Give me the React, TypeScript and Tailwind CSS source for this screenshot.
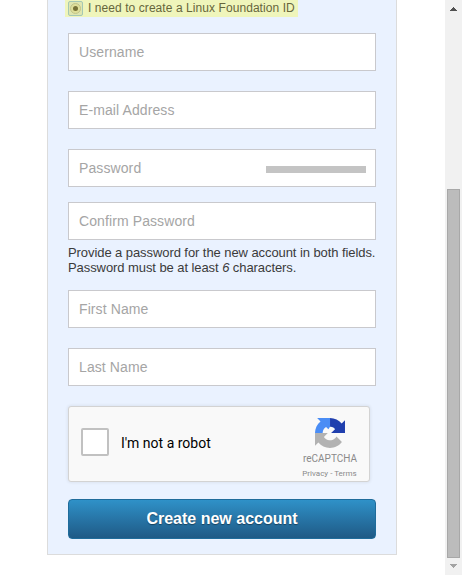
type FieldProps = { label: string; className?: string; strength?: boolean };

function Field({ label, className = "", strength = false }: FieldProps) {
  return (
    <div className={`flex h-[38px] shrink-0 items-center justify-between border border-[#c9c9cd] bg-white px-2.5 pr-[9px] text-[14px] tracking-[0.1px] text-[#a5a5a5] ${className}`}>
      <span>{label}</span>
      {strength && <span className="mt-[3px] h-[7px] w-[100px] bg-[#c4c4c4]" />}
    </div>
  );
}

function RecaptchaLogo() {
  return (
    <svg width="30" height="30" viewBox="0 0 64 64" className="block">
      <path fill="#203fae" d="M64 31.955l-.033-1.37V4.687l-7.16 7.16C50.948 4.674 42.033.093 32.05.093v18.6c.485 0 .86.057 1.135.163 4.976.393 7 1.5 9.5 5l-8.307 8.1L64 31.953" />
      <path fill="#4a8df5" d="M32.05.094H4.594l7.16 7.16C4.58 13.147 0 22.06 0 32.046h16.26c0-.485.057-.86.163-1.135.393-4.976 3.14-9.288 7.124-11.828l5 5 3.5-5.4V.095" />
      <path fill="#b2b2b2" d="M.001 32.045l.033 1.37v25.898l7.16-7.16c5.86 7.173 14.774 11.754 24.76 11.754 10.4 0 19.622-4.96 25.458-12.64l-11.736-11.86a15.55 15.55 0 0 1-4.754 5.334c-2.05 1.6-4.952 2.906-8.968 2.906-.485 0-.86-.057-1.135-.163-4.976-.393-9.288-3.14-11.828-7.124l8.307-8.307c-10.522.04-22.4.066-27.295-.005" />
    </svg>
  );
}

function Recaptcha() {
  return (
    <div className="mt-5 flex h-[76px] w-[302px] shrink-0 rounded-[3px] border border-[#d3d3d3] bg-[#f9f9f9] font-[Roboto,sans-serif] shadow-[0_0_3px_1px_rgba(0,0,0,0.06)]">
      <div className="flex flex-1 items-center pb-1 pl-3">
        <span className="h-7 w-7 rounded-[2px] border-2 border-[#c1c1c1] bg-white" />
        <span className="ml-3 pt-0.5 text-[14px] leading-[17px] text-black">I'm not a robot</span>
      </div>
      <div className="flex w-[80px] flex-col items-center pt-[11px] pl-0.5 text-[#8a8a8a]">
        <RecaptchaLogo />
        <span className="mt-[6px] text-[10px] leading-[10px]">reCAPTCHA</span>
        <span className="mt-[5px] mr-px text-[8px] leading-[9px]">Privacy - Terms</span>
      </div>
    </div>
  );
}

function ScrollBar() {
  return (
    <div className="flex h-full w-[17px] flex-col items-center bg-[#f1f1f1]">
      <svg width="17" height="17" viewBox="0 0 17 17" shapeRendering="crispEdges">
        <path d="M8 7h1v1h1v1h1v1h1v1H5v-1h1V9h1V8h1z" fill="#505050" />
      </svg>
      <div className="mt-[172px] h-[369px] w-[13px] border border-[#a8a8a8] bg-[#bcbcbc]" />
      <svg width="17" height="17" viewBox="0 0 17 17" shapeRendering="crispEdges">
        <path d="M5 6h7v1h-1v1h-1v1H9v1H8V9H7V8H6V7H5z" fill="#a3a3a3" />
      </svg>
    </div>
  );
}

export default function App() {
  return (
    <div className="flex h-[575px] w-[462px] justify-between overflow-hidden bg-white font-['Liberation_Sans',Arial,sans-serif]">
      <main className="ml-[47px] flex h-[555px] w-[350px] flex-col border border-t-0 border-[#dcdcdc] bg-[#eaf2ff] px-5">
        <label className="-ml-[3px] flex h-[17px] w-[233px] shrink-0 items-center bg-[#eff5bb] pl-[3px] text-[12px] text-[#66663c]">
          <span className="flex h-[15px] w-[15px] shrink-0 items-center justify-center rounded-[2px] border border-[#a5c8b4] bg-[#dfe6b0]">
            <span className="flex h-[11px] w-[11px] shrink-0 items-center justify-center rounded-full border border-[#c0c48a] bg-[#dfdf9a]">
              <span className="h-[5px] w-[5px] rounded-full bg-[#777337]" />
            </span>
          </span>
          <span className="ml-[5px] whitespace-nowrap pb-0.5 tracking-[0.07px]">I need to create a Linux Foundation ID</span>
        </label>
        <Field label="Username" className="mt-4" />
        <Field label="E-mail Address" className="mt-5" />
        <Field label="Password" className="mt-5" strength />
        <Field label="Confirm Password" className="mt-[15px]" />
        <p className="mt-[5px] h-[30px] shrink-0 whitespace-nowrap text-[13px] leading-[15px] tracking-[-0.075px] text-[#3b3b3b]">
          Provide a password for the new account in both fields.
          <br />
          Password must be at least <em>6</em> characters.
        </p>
        <Field label="First Name" className="mt-[15px]" />
        <Field label="Last Name" className="mt-5" />
        <Recaptcha />
        <button className="mt-[17px] h-10 shrink-0 rounded-[4px] border border-[#1f6c9b] bg-linear-to-b from-[#2f91c8] to-[#1f5a86] text-[16px] font-bold text-white [text-shadow:0_1px_1px_rgba(0,0,0,0.4)]">
          Create new account
        </button>
      </main>
      <ScrollBar />
    </div>
  );
}
